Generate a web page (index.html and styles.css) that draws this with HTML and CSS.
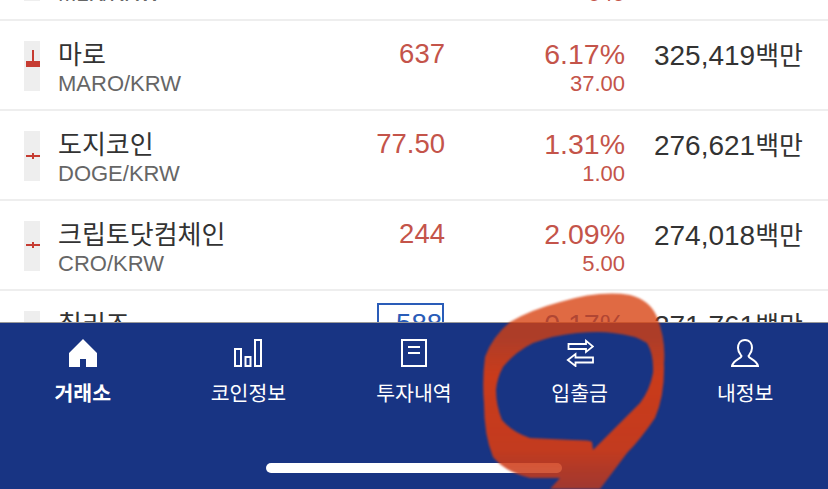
FILE: index.html
```html
<!DOCTYPE html>
<html lang="ko">
<head>
  <meta charset="UTF-8" />
  <meta name="viewport" content="width=device-width, initial-scale=1.0" />
  <title>거래소</title>
  <link rel="stylesheet" href="styles.css">
</head>
<body>
  <div class="market">
    <div class="coin-list">
      <div class="coin-row">
        <svg class="thumb" viewBox="0 0 16 50"><rect width="16" height="50" fill="#eee"/></svg>
        <div class="coin-name"><div class="name-ko">밀크</div><div class="name-en">MLK/KRW</div></div>
        <div class="price up">1,150</div>
        <div class="change up"><div class="pct">4.97%</div><div class="diff">545</div></div>
        <div class="volume">331,204<span class="unit">백만</span></div>
      </div>
      <div class="coin-row">
        <svg class="thumb" viewBox="0 0 16 50"><rect width="16" height="50" fill="#eee"/><rect x="8" y="9" width="2" height="12" fill="#c63c32"/><rect x="2" y="20" width="14" height="6" fill="#c63c32"/></svg>
        <div class="coin-name"><div class="name-ko">마로</div><div class="name-en">MARO/KRW</div></div>
        <div class="price up">637</div>
        <div class="change up"><div class="pct">6.17%</div><div class="diff">37.00</div></div>
        <div class="volume">325,419<span class="unit">백만</span></div>
      </div>
      <div class="coin-row">
        <svg class="thumb" viewBox="0 0 16 50"><rect width="16" height="50" fill="#eee"/><rect x="8" y="22" width="2" height="6" fill="#c63c32"/><rect x="2" y="24" width="14" height="2" fill="#c63c32"/></svg>
        <div class="coin-name"><div class="name-ko">도지코인</div><div class="name-en">DOGE/KRW</div></div>
        <div class="price up">77.50</div>
        <div class="change up"><div class="pct">1.31%</div><div class="diff">1.00</div></div>
        <div class="volume">276,621<span class="unit">백만</span></div>
      </div>
      <div class="coin-row">
        <svg class="thumb" viewBox="0 0 16 50"><rect width="16" height="50" fill="#eee"/><rect x="8" y="21" width="2" height="6" fill="#c63c32"/><rect x="2" y="23" width="14" height="2" fill="#c63c32"/></svg>
        <div class="coin-name"><div class="name-ko">크립토닷컴체인</div><div class="name-en">CRO/KRW</div></div>
        <div class="price up">244</div>
        <div class="change up"><div class="pct">2.09%</div><div class="diff">5.00</div></div>
        <div class="volume">274,018<span class="unit">백만</span></div>
      </div>
      <div class="coin-row">
        <svg class="thumb" viewBox="0 0 16 50"><rect width="16" height="50" fill="#eee"/></svg>
        <div class="coin-name"><div class="name-ko">칠리즈</div><div class="name-en">CHZ/KRW</div></div>
        <div class="price down"><span class="flash">588</span></div>
        <div class="change down"><div class="pct">0.17%</div><div class="diff">1.00</div></div>
        <div class="volume">271,761<span class="unit">백만</span></div>
      </div>
    </div>
  </div>

  <nav class="tabbar">
    <div class="tabs">
      <a class="tab active">
        <svg class="tab-icon" viewBox="0 0 28 28"><path d="M14 0L28 14V28H17V20H11V28H0V14Z" fill="#fff"/></svg>
        <span>거래소</span>
      </a>
      <a class="tab">
        <svg class="tab-icon" viewBox="0 0 28 28" fill="none" stroke="#fff" stroke-width="2"><rect x="1" y="10" width="6" height="17"/><rect x="11.5" y="18" width="5" height="9"/><rect x="21" y="1" width="6" height="26"/></svg>
        <span>코인정보</span>
      </a>
      <a class="tab">
        <svg class="tab-icon" viewBox="0 0 28 28" fill="none" stroke="#fff" stroke-width="2"><rect x="2" y="1" width="24" height="26"/><path d="M8 8H20M8 14H20"/></svg>
        <span>투자내역</span>
      </a>
      <a class="tab">
        <svg class="tab-icon" viewBox="0 0 28 28" fill="none" stroke="#fff" stroke-width="1.8"><path d="M2.5 5H20V1.8L27 7.5L20 13V10H2.5Z"/><path d="M27 18.5H9.5V15L1.8 21L9.5 27V23.5H27Z"/></svg>
        <span>입출금</span>
      </a>
      <a class="tab">
        <svg class="tab-icon" viewBox="0 0 28 28" fill="none" stroke="#fff" stroke-width="2"><path d="M14 1C9 1 7 5 7 9C7 13 9 15 10.5 17C10 20 3 20 1 27H27C25 20 18 20 17.5 17C19 15 21 13 21 9C21 5 19 1 14 1Z"/></svg>
        <span>내정보</span>
      </a>
    </div>
    <div class="home-bar"></div>
  </nav>

  <svg class="scribble" viewBox="0 0 828 489">
    <defs>
      <linearGradient id="pen" gradientUnits="userSpaceOnUse" x1="0" y1="295" x2="0" y2="489">
        <stop offset="0" stop-color="#d8400f" stop-opacity="0.78"/>
        <stop offset="0.22" stop-color="#d8400f" stop-opacity="0.78"/>
        <stop offset="0.42" stop-color="#d63c14" stop-opacity="0.94"/>
        <stop offset="0.8" stop-color="#d63c14" stop-opacity="0.9"/>
        <stop offset="1" stop-color="#c23a1c" stop-opacity="0.8"/>
      </linearGradient>
    </defs>
    <path fill="url(#pen)" fill-rule="evenodd" d="M560 302Q600 290 630 295Q650 300 657 317Q666 340 664 363Q665 395 655 418Q640 440 627 453L600 489L550 489L560 478L530 478Q505 472 493 457Q484 435 484 403Q482 380 485 357Q492 337 510 322Q530 310 560 302ZM577 333Q600 331 613 333Q635 335 647 343Q654 355 653 373Q650 390 640 403L593 450L592 442Q590 440 573 440L530 438Q512 432 502 420Q496 405 496 390Q497 378 503 367Q515 352 533 343Q555 335 577 333Z"/>
  </svg>
</body>
</html>
```

FILE: styles.css
```css
html, body {
  height: 100%;
}
body {
  margin: 0;
  display: flex;
  flex-direction: column;
  overflow: hidden;
  background: #fff;
  color: #333;
  font-family: "Liberation Sans", "Noto Sans CJK KR", sans-serif;
}
.market {
  flex: 1;
  min-height: 0;
  overflow: hidden;
}
.coin-list {
  margin-top: -69px;
}
.coin-row {
  display: flex;
  box-sizing: border-box;
  height: 90px;
  padding: 0 25px 0 24px;
  border-bottom: 2px solid #eee;
}
.thumb {
  flex: none;
  width: 16px;
  height: 50px;
  margin: 20px 18px 0 0;
}
.coin-name {
  flex: 1;
  padding-top: 16px;
}
.name-ko {
  font-size: 26px;
  line-height: 32px;
  font-family: "Noto Sans CJK KR", sans-serif;
}
.name-en {
  font-size: 22px;
  line-height: 30px;
  color: #666;
}
.price {
  padding-top: 17px;
  font-size: 27.5px;
  line-height: 32px;
  text-align: right;
}
.change {
  flex: none;
  width: 180px;
  padding-top: 17px;
  text-align: right;
}
.pct {
  font-size: 28.5px;
  line-height: 32px;
}
.diff {
  font-size: 22px;
  line-height: 28px;
}
.volume {
  flex: none;
  width: 178px;
  padding-top: 17px;
  font-size: 28px;
  line-height: 32px;
  text-align: right;
}
.unit {
  font-size: 26px;
  font-family: "Noto Sans CJK KR", sans-serif;
}
.up {
  color: #c4544a;
}
.down {
  color: #2a5cb8;
}
.flash {
  display: block;
  box-sizing: border-box;
  width: 67px;
  height: 44px;
  margin: -5px 1px 0 0;
  border: 2px solid #2a5cb8;
  line-height: 38px;
}
.tabbar {
  flex: none;
  display: flex;
  flex-direction: column;
  box-sizing: border-box;
  height: 167px;
  border-top: 1px solid #999;
  background: #183483;
}
.tabs {
  display: flex;
  padding-top: 16px;
}
.tab {
  flex: 1;
  display: flex;
  flex-direction: column;
  align-items: center;
  color: #fff;
  font-family: "Noto Sans CJK KR", sans-serif;
  font-size: 20.5px;
  line-height: 26px;
}
.tab.active {
  font-weight: 700;
}
.tab-icon {
  width: 28px;
  height: 28px;
  margin-bottom: 12px;
}
.home-bar {
  width: 296px;
  height: 10px;
  margin: auto auto 16px;
  border-radius: 5px;
  background: #fff;
}
.scribble {
  position: absolute;
  top: 0;
  left: 0;
  width: 828px;
  height: 489px;
  filter: blur(0.8px);
  pointer-events: none;
}
```
